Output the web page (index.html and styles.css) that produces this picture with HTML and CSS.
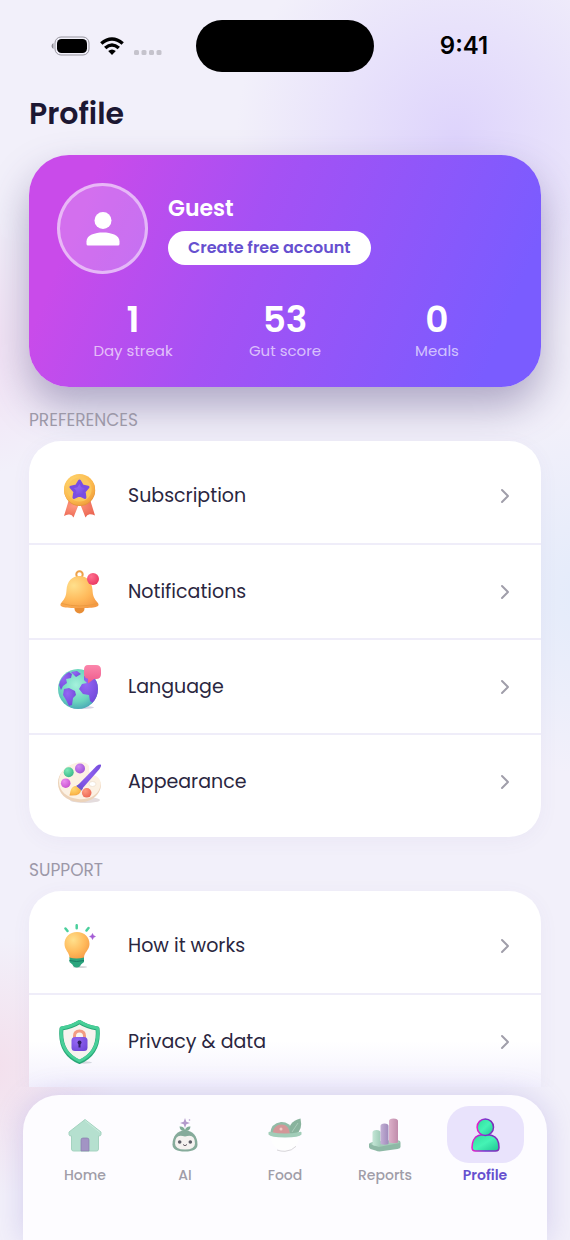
FILE: index.html
```html
<!DOCTYPE html>
<html lang="en">
<head>
<meta charset="utf-8">
<meta name="viewport" content="width=device-width, initial-scale=1">
<title>Profile</title>
<link rel="stylesheet" href="styles.css">
</head>
<body>
<svg class="defs" width="0" height="0" aria-hidden="true">
  <defs>
    <radialGradient id="gold" cx=".35" cy=".3" r=".8"><stop offset="0" stop-color="#ffd873"/><stop offset=".7" stop-color="#fbb84c"/><stop offset="1" stop-color="#ee9a3b"/></radialGradient>
    <radialGradient id="amber" cx=".35" cy=".3" r=".8"><stop offset="0" stop-color="#ffe08c"/><stop offset=".6" stop-color="#ffb95a"/><stop offset="1" stop-color="#f59a45"/></radialGradient>
    <radialGradient id="coral" cx=".35" cy=".3" r=".8"><stop offset="0" stop-color="#ff9a80"/><stop offset="1" stop-color="#ea6350"/></radialGradient>
    <radialGradient id="violet" cx=".35" cy=".3" r=".9"><stop offset="0" stop-color="#9566f4"/><stop offset="1" stop-color="#6a44d4"/></radialGradient>
    <radialGradient id="orchid" cx=".35" cy=".3" r=".8"><stop offset="0" stop-color="#d089f2"/><stop offset="1" stop-color="#9a4fd6"/></radialGradient>
    <radialGradient id="magenta" cx=".35" cy=".3" r=".8"><stop offset="0" stop-color="#ec8df0"/><stop offset="1" stop-color="#c54dcd"/></radialGradient>
    <radialGradient id="rose" cx=".35" cy=".3" r=".8"><stop offset="0" stop-color="#ff6f8f"/><stop offset="1" stop-color="#e8355f"/></radialGradient>
    <radialGradient id="sea" cx=".45" cy=".4" r=".7"><stop offset="0" stop-color="#a5f2dc"/><stop offset=".6" stop-color="#6ad4bd"/><stop offset="1" stop-color="#3c98b3"/></radialGradient>
    <radialGradient id="mint" cx=".35" cy=".3" r=".8"><stop offset="0" stop-color="#7de8b8"/><stop offset="1" stop-color="#35b585"/></radialGradient>
    <linearGradient id="neon" x1="0" y1="0" x2="1" y2="0"><stop offset="0" stop-color="#e91fc9"/><stop offset=".5" stop-color="#7a2fd0"/><stop offset="1" stop-color="#7f2fb8"/></linearGradient>
    <linearGradient id="jade" x1="0" y1="0" x2="1" y2="1"><stop offset="0" stop-color="#2fdc9c"/><stop offset=".5" stop-color="#45f3b5"/><stop offset="1" stop-color="#1fc591"/></linearGradient>
    <linearGradient id="pink" x1="0" y1="0" x2="0" y2="1"><stop offset="0" stop-color="#fb86ab"/><stop offset="1" stop-color="#ee5b8c"/></linearGradient>
    <linearGradient id="pillarGreen" x1="0" y1="0" x2="1" y2="0"><stop offset="0" stop-color="#c4e6d6"/><stop offset="1" stop-color="#9fccb8"/></linearGradient>
    <linearGradient id="pillarPurple" x1="0" y1="0" x2="1" y2="0"><stop offset="0" stop-color="#c3b0d5"/><stop offset="1" stop-color="#a08abb"/></linearGradient>
    <linearGradient id="pillarPink" x1="0" y1="0" x2="1" y2="0"><stop offset="0" stop-color="#dcb0c9"/><stop offset="1" stop-color="#c08cab"/></linearGradient>
    <clipPath id="globeClip"><circle cx="21" cy="24" r="20"/></clipPath>
  </defs>
</svg>

<div class="screen">
  <div class="status">
    <div class="status-side">
      <svg class="battery" viewBox="0 0 39 20" aria-hidden="true"><path d="M2.500 7v6Q.5 12 .5 10t2-3Z" fill="#8c8a93"/><rect x="4" y="1" width="34" height="18" rx="6" fill="none" stroke="#97959e"/><rect x="6" y="3" width="30" height="14" rx="4.500"/></svg>
      <svg class="wifi" viewBox="0 0 24 18" aria-hidden="true"><g fill="none" stroke="#000" stroke-width="3.500"><path d="M1.300 6.500q10.700-9 21.400 0"/><path d="M5.200 11q6.800-6 13.600 0"/></g><path d="M8.200 14q3.800-3 7.600 0L12 18Z"/></svg>
      <svg class="signal" viewBox="0 0 28 5" fill="#c5c3cc" aria-hidden="true"><rect width="5" height="5" rx="1.500"/><rect x="7.500" width="5" height="5" rx="1.500"/><rect x="15" width="5" height="5" rx="1.500"/><rect x="22.500" width="5" height="5" rx="1.500"/></svg>
    </div>
    <div class="island"></div>
    <div class="status-side status-end"><span class="time">9:41</span></div>
  </div>

  <main class="content">
    <h1 class="title">Profile</h1>

    <section class="hero">
      <div class="person">
        <div class="avatar"><svg viewBox="0 0 34 36" fill="#fff" aria-hidden="true"><circle cx="17" cy="9.500" r="8.500"/><path d="M.5 33v-2.500C.5 24 9 21.500 17 21.500S33.500 24 33.500 30.500V33q0 1.500-1.500 1.500H2Q.5 34.500.5 33Z"/></svg></div>
        <div class="identity">
          <h2 class="name">Guest</h2>
          <button class="create" type="button">Create free account</button>
        </div>
      </div>
      <dl class="stats">
        <div class="stat"><dt>Day streak</dt><dd>1</dd></div>
        <div class="stat"><dt>Gut score</dt><dd>53</dd></div>
        <div class="stat"><dt>Meals</dt><dd>0</dd></div>
      </dl>
    </section>

    <h3 class="heading">PREFERENCES</h3>
    <ul class="list">
      <li><a class="row" href="#subscription">
        <svg class="art" viewBox="0 0 44 44" aria-hidden="true"><path d="m11.500 27-4.500 15q3-2 5.500-1.500 2.500 0 4 3l6-15Zm22 0 4.500 14.500q-3-1.500-5.500-1.300-2.500.3-4 3.300l-6-15Z" fill="url(#coral)"/><circle cx="22.700" cy="16.500" r="15.500" fill="#e6973a"/><circle cx="22.500" cy="15.500" r="15.500" fill="url(#gold)"/><circle cx="22.500" cy="15.500" r="12" fill="#fac75e"/><path d="m22.500 7 2.900 5 5.600 1.100-3.800 4.500.7 5.800-5.400-2.400-5.500 2.400.8-5.800-3.900-4.500 5.600-1.100Z" fill="url(#violet)" stroke="#7a4de2" stroke-width="3" stroke-linejoin="round"/></svg>
        <span class="label">Subscription</span><svg class="chevron" viewBox="0 0 10 16" aria-hidden="true"><path d="m2 2 6 6-6 6"/></svg></a></li>
      <li><a class="row" href="#notifications">
        <svg class="art" viewBox="0 0 44 44" aria-hidden="true"><circle cx="22.500" cy="4.500" r="3.200" fill="none" stroke="#eda149" stroke-width="2"/><circle cx="22.500" cy="38.500" r="5" fill="#e88e36"/><path d="M22.500 6C15 6 10 11.500 9.500 20c-.3 6-1.500 8.500-5 12.500C1 37 6 38 22.500 38S44 37 40.500 32.500c-3.500-4-4.700-6.500-5-12.500C35 11.500 30 6 22.500 6Z" fill="url(#amber)"/><path d="M4.500 33.500q18 5 36 0" fill="none" stroke="#eb9b40" stroke-width="1"/><circle cx="36" cy="9" r="6" fill="url(#rose)"/></svg>
        <span class="label">Notifications</span><svg class="chevron" viewBox="0 0 10 16" aria-hidden="true"><path d="m2 2 6 6-6 6"/></svg></a></li>
      <li><a class="row" href="#language">
        <svg class="art" viewBox="0 0 44 44" aria-hidden="true"><ellipse cx="26" cy="42.500" rx="11" ry="1.500" fill="#d6d3e4"/><circle cx="21" cy="24" r="20" fill="url(#sea)"/><g clip-path="url(#globeClip)" fill="url(#violet)"><path d="M2 20q2-9 10-13l3 2-1 4-5 1 1 4-4 3-2 4Z"/><path d="m14 7 6-1 4 3-5 3Z"/><path d="m7 24 5-1 6 3 1 4-3 3-1 7-3 1-3-6-3-5Z"/><path d="m27 11 8-1 7 10v13l-5 6-4-3-1-6-6-1-4-5 3-5 5-1-3-3Z"/></g><path d="M31 0h8q5 0 5 5v4q0 5-5 5h-2l-5.500 4q-.5.500-.5-.2v-4Q27 13 27 9V5q0-5 4-5Z" fill="url(#pink)"/></svg>
        <span class="label">Language</span><svg class="chevron" viewBox="0 0 10 16" aria-hidden="true"><path d="m2 2 6 6-6 6"/></svg></a></li>
      <li><a class="row" href="#appearance">
        <svg class="art" viewBox="0 0 44 44" aria-hidden="true"><ellipse cx="28" cy="40" rx="15" ry="3" fill="#e4dcdd"/><path d="M17 4.500c9-3 16-.5 15 5-.5 5 3 5.500 7 7.500 5 2.500 6.500 9 3 15-4 7-12 11-21 10C9 41 1 33 1 23 1 13.500 8 7 17 4.500Z" fill="#ecd3ba"/><path d="M17 3.500c9-3 16-.5 15 5-.5 5 3 5.500 7 7.500 5 2.500 6 8 3 14-4 7-12 10-21 9C10 38 2 31 2 22 2 13 8 6 17 3.500Z" fill="#fcf1e3"/><ellipse cx="35.500" cy="24" rx="3.500" ry="2.500" fill="#fff" stroke="#eddcca" stroke-width=".7"/><circle cx="11.700" cy="12.200" r="5" fill="url(#mint)"/><circle cx="23" cy="8.500" r="5" fill="url(#orchid)"/><circle cx="8.700" cy="23.200" r="4.800" fill="url(#magenta)"/><circle cx="29.700" cy="32.800" r="4.800" fill="url(#coral)"/><path d="m20.500 25.500 19-19.500q3-2 4.500-1.300.5 1.500-1.500 4.300L24.500 29.500Z" fill="url(#violet)"/><path d="m21.500 24.500-2.500 1.500 5 5 2-2.500Z" fill="#6e58ce"/><path d="M19 26q-4 0-5.500 5l-1 4.500q7 .500 9.500-1.500 2-1.500 2-4Z" fill="url(#gold)"/></svg>
        <span class="label">Appearance</span><svg class="chevron" viewBox="0 0 10 16" aria-hidden="true"><path d="m2 2 6 6-6 6"/></svg></a></li>
    </ul>

    <h3 class="heading">SUPPORT</h3>
    <ul class="list list-last">
      <li><a class="row" href="#how">
        <svg class="art" viewBox="0 0 44 44" aria-hidden="true"><ellipse cx="23" cy="43" rx="7" ry="1" fill="#d5d6d9"/><g stroke="#4bcf9c" stroke-width="2.500" stroke-linecap="round"><path d="M19.700 1.200v3M8.500 4.500l2 2.500M31.500 4l-2 2.500"/></g><path d="M12.500 33h14.500v5l-3 2.500q-1 3-4.300 3t-4.300-3l-2.900-2.500Z" fill="#2ba57d"/><path d="M12.500 36.500q7 2 14.500 0" fill="none" stroke="#187b63"/><path d="M20 8C12.500 8 7.500 13 7.500 20c0 6 5 8.500 5 13.500q7 2 14.500 0C27 28.500 32.500 26 32.500 20 32.500 13 27.500 8 20 8Z" fill="url(#amber)"/><path d="m35.500 9.500 1 2 2 1-2 1-1 2-1-2-2-1 2-1Z" fill="#a35bd4" stroke="#a35bd4" stroke-width=".5"/></svg>
        <span class="label">How it works</span><svg class="chevron" viewBox="0 0 10 16" aria-hidden="true"><path d="m2 2 6 6-6 6"/></svg></a></li>
      <li><a class="row" href="#privacy">
        <svg class="art" viewBox="0 0 44 44" aria-hidden="true"><ellipse cx="27" cy="42.500" rx="8" ry="1.200" fill="#d4d8df"/><path d="M22.500 2q7.500 5 18 6.500Q43 33 22.500 42 2 33 4.500 8.500 15 7 22.500 2Z" fill="#f7f3ef" stroke="#28a777" stroke-width="4" stroke-linejoin="round"/><path d="M22.500 1.500q7.500 5 18 6.500Q43 32 22.500 41 2 32 4.500 8 15 6.500 22.500 1.500Z" fill="none" stroke="#48cf98" stroke-width="3" stroke-linejoin="round"/><path d="M17.500 19v-3q0-5 5-5t5 5v3" fill="none" stroke="#f29b83" stroke-width="3"/><rect x="14.500" y="17" width="16" height="14" rx="3.500" fill="url(#violet)"/><circle cx="22.500" cy="22.500" r="2" fill="#302067"/><path d="M22.500 23v4.500" stroke="#302067" stroke-width="2"/></svg>
        <span class="label">Privacy &amp; data</span><svg class="chevron" viewBox="0 0 10 16" aria-hidden="true"><path d="m2 2 6 6-6 6"/></svg></a></li>
    </ul>
  </main>

  <nav class="tabs" aria-label="Main">
    <a class="tab" href="#home"><span class="pill"><svg viewBox="0 0 36 36" aria-hidden="true"><path d="M18 2.500 2 15v2.500q0 1.500 2.500 1.500V32q0 2 2 2h23q2 0 2-2V19q2.500 0 2.500-1.500V15Z" fill="#b5e0cf" stroke="#a5d3c0" stroke-linejoin="round"/><path d="m18 3.500 15 12" fill="none" stroke="#c7ebdd"/><path d="M14 34V23q0-2 2-2h4q2 0 2 2v11Z" fill="#a294c4" stroke="#877ead" stroke-width=".7"/></svg></span>Home</a>
    <a class="tab" href="#ai"><span class="pill"><svg viewBox="0 0 36 36" aria-hidden="true"><path d="m18 1 1.300 3.700L23 6l-3.700 1.300L18 11l-1.300-3.700L13 6l3.700-1.300Z" fill="#b39acb"/><circle cx="22.500" cy="3" r=".8" fill="#b39acb"/><path d="M18 14q-5 .500-5.500-4.500Q17 9 18 13q1-4 5.500-3.500Q23 14.500 18 14Z" fill="#7fac96"/><path d="M18 13.500c8 0 12.500 6 12.500 14q0 7-12.500 7t-12.500-7c0-8 4.500-14 12.500-14Z" fill="#86ab9b"/><path d="M18 19.500q10-3.500 10 7 0 6-10 6t-10-6q0-10.500 10-7Z" fill="#f5f2f0"/><g fill="#5c5c66"><circle cx="12.700" cy="25" r="1.800"/><circle cx="23.300" cy="25" r="1.800"/></g><path d="M16 27.500q2 2.500 4 0" fill="none" stroke="#655d66"/></svg></span>AI</a>
    <a class="tab" href="#food"><span class="pill"><svg viewBox="0 0 36 36" aria-hidden="true"><path d="M3 17Q4 6 14 5q8-.5 13 9v4Z" fill="#92bba7"/><path d="M5.500 16Q7 7.500 14.500 7.500T23 17H6Z" fill="#d39798"/><circle cx="14" cy="12" r="1.500" fill="#f0c8c3"/><path d="M23 16Q20 5 33.500 1.500 36 13 29 17Z" fill="#89b39d"/><path d="m25 15 6-9" stroke="#a9cbb9"/><path d="M1.500 15.500q0-1 2-.5 14.500 3 29 0 2-.5 2 .5v2q-2 3-16.500 3t-16.500-3Z" fill="#a1cdb8"/><path d="M4 20.500q1 11.500 14 13.500 13-2 14-13.500-14 2-28 0Z" fill="#fefefe"/><path d="M10 33q4 1.500 8 1.300 7-.5 11-5" fill="none" stroke="#d8d6da"/></svg></span>Food</a>
    <a class="tab" href="#reports"><span class="pill"><svg viewBox="0 0 36 36" aria-hidden="true"><path d="M2 27q1-2 8-2.500L28 23q6 0 5.500 3v4q0 1.500-3 2l-18 2.500q-2 0-4-1L3.500 32Q2 31 2 30Z" fill="#8eb9a6"/><path d="M3 27q1-1.500 7-2l18-1.500q5 0 4.500 2.500l-21 4Z" fill="#a4cdb9"/><path d="M5.500 15.500q0-2.500 4-2.500t4 2.500V28q-4 2-8 0Z" fill="url(#pillarGreen)"/><path d="M13.500 9q0-2.500 4-2.500t4 2.500v18q-4 1.500-8 0Z" fill="url(#pillarPurple)"/><path d="M22 4q0-2.500 4.500-2.500T31 4v21.500q-4 1.500-9 0Z" fill="url(#pillarPink)"/></svg></span>Reports</a>
    <a class="tab tab-active" href="#profile" aria-current="page"><span class="pill"><svg viewBox="0 0 36 36" aria-hidden="true"><g fill="url(#jade)" stroke="url(#neon)" stroke-width="1.500"><path d="M11.500 18.500q6.500-2 13.500 0c5 1.500 7 7 7 12q0 3.500-3.500 3.500h-20Q5 34 5 30.500c0-5 2-10.500 6.500-12Z"/><circle cx="18.300" cy="10.200" r="8.200"/></g></svg></span>Profile</a>
  </nav>
</div>
</body>
</html>
```
FILE: styles.css
```css
* { box-sizing: border-box; }

body {
  margin: 0;
  font-family: Poppins, Inter, "Open Sans", sans-serif;
  color: #1c1732;
}

h1, h2, h3, ul, dl, dd { margin: 0; padding: 0; }
ul { list-style: none; }
a { color: inherit; text-decoration: none; }
svg { display: block; flex: none; }
.defs { position: absolute; }

.screen {
  display: flex;
  flex-direction: column;
  height: 100vh;
  overflow: hidden;
  background:
    radial-gradient(circle at 80% 11%, #ded4fc 0, #ded4fc00 220px),
    radial-gradient(circle at 104% 48%, #e3ebfa 0, #e3ebfa00 180px),
    radial-gradient(circle at -6% 28%, #f2e0f4 0, #f2e0f400 130px),
    radial-gradient(circle at -2% 86%, #f3dfec 0, #f3dfec00 130px),
    #f2f0fa;
}

.status {
  display: flex;
  align-items: center;
  flex: none;
  height: 92px;
}
.status-side {
  display: flex;
  flex: 1;
  align-items: center;
  justify-content: center;
  gap: 10px;
  padding-left: 16px;
}
.status-end { padding: 0 16px 0 0; }
.island {
  width: 178px;
  height: 52px;
  border-radius: 26px;
  background: #000;
}
.battery { width: 39px; height: 20px; }
.wifi { width: 24px; height: 18px; }
.signal { width: 28px; height: 5px; margin-top: 12px; }
.time {
  font: 600 24px/28px Inter, sans-serif;
  color: #000;
}

.content {
  display: flex;
  flex: 1;
  flex-direction: column;
  min-height: 0;
  padding: 0 29px;
  overflow: hidden;
}
.title {
  flex: none;
  margin-bottom: 19px;
  font-size: 30px;
  font-weight: 600;
  line-height: 44px;
}

.hero {
  flex: none;
  padding: 28px 28px 26px;
  border-radius: 40px;
  background: linear-gradient(112deg, #c94bea 12%, #a551f4 42%, #7a5cff 90%);
  box-shadow: 0 20px 40px #4a3c7866;
  color: #fff;
}
.person {
  display: flex;
  align-items: center;
  gap: 20px;
}
.avatar {
  display: grid;
  place-items: center;
  width: 91px;
  height: 91px;
  border: 3px solid #ffffff80;
  border-radius: 50%;
  background: #ffffff33;
}
.avatar svg { width: 34px; height: 36px; }
.name {
  margin: 2px 0 8px;
  font-size: 22px;
  font-weight: 600;
  line-height: 28px;
}
.create {
  display: block;
  padding: 0 20px;
  border: 0;
  border-radius: 17px;
  background: #fff;
  color: #6650cf;
  font: 600 16px/34px Poppins, Inter, sans-serif;
}
.stats {
  display: grid;
  grid-template-columns: repeat(3, 1fr);
  margin-top: 26px;
  text-align: center;
}
.stat {
  display: flex;
  flex-direction: column-reverse;
  gap: 1px;
}
.stat dt {
  color: #ffffffa6;
  font-size: 15px;
  line-height: 20px;
}
.stat dd {
  font-size: 36px;
  font-weight: 600;
  line-height: 40px;
}

.heading {
  flex: none;
  margin: 21px 0 9px;
  color: #9c98a8;
  font-size: 17px;
  font-weight: 400;
  line-height: 24px;
}
.list {
  flex: none;
  padding: 8px 0 9px;
  border-radius: 32px;
  background: #fff;
  box-shadow: 0 4px 20px #5d4d9c0d;
}
.list-last {
  flex: 1 0 0;
  min-height: 0;
  padding-bottom: 0;
  border-radius: 32px 32px 0 0;
  background: linear-gradient(#fff 150px, #f3f1fd);
}
.list li + li { border-top: 2px solid #efedf9; }
.row {
  display: flex;
  align-items: center;
  gap: 27px;
  height: 94px;
  padding: 0 28px;
}
.list li + li .row { height: 93px; }
.art { width: 44px; height: 44px; }
.label {
  flex: 1;
  color: #2a2640;
  font-size: 19px;
  line-height: 28px;
}
.chevron {
  width: 10px;
  height: 16px;
  margin-right: 3px;
  fill: none;
  stroke: #a09eaa;
  stroke-width: 2;
  stroke-linecap: round;
  stroke-linejoin: round;
}

.tabs {
  display: grid;
  grid-template-columns: repeat(5, 1fr);
  flex: none;
  height: 145px;
  margin: 8px 23px 0;
  padding: 11px 12px;
  border-radius: 36px 36px 0 0;
  background: #fdfcff;
  box-shadow: 0 0 28px #7766cc40;
}
.tab {
  display: flex;
  flex-direction: column;
  align-items: center;
  gap: 2px;
  color: #a09da8;
  font-size: 14px;
  font-weight: 500;
  line-height: 20px;
}
.pill {
  display: grid;
  place-items: center;
  width: 77px;
  height: 57px;
  border-radius: 22px;
}
.pill svg { width: 36px; height: 36px; }
.tab-active { color: #6650cf; font-weight: 600; }
.tab-active .pill { background: #e9e3fc; }
```
